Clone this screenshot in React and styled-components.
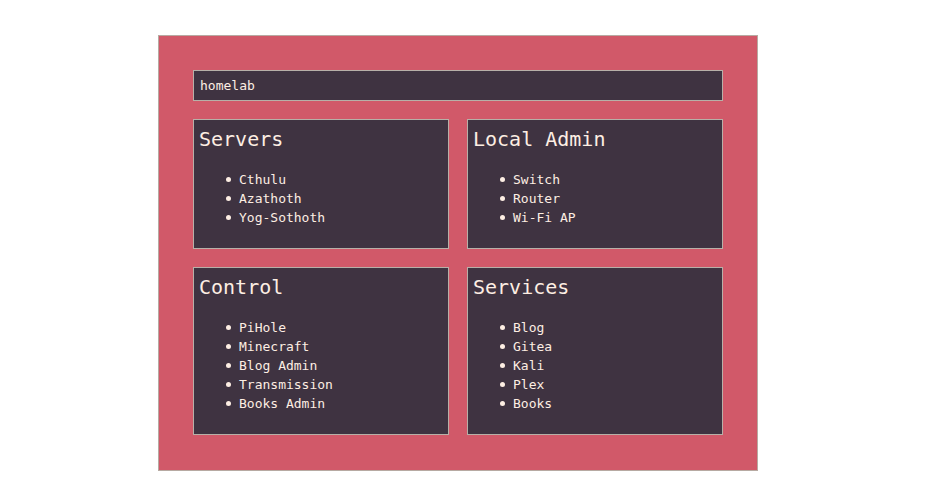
import React from "react";
import styled, { createGlobalStyle } from "styled-components";

const GlobalStyle = createGlobalStyle`
  body {
    margin: 0;
    background: #ffffff;
    color: #fdeee3;
    font-family: "DejaVu Sans Mono", "Liberation Mono", monospace;
    font-size: 13px;
    line-height: 19px;
  }

  *, *::before, *::after {
    box-sizing: border-box;
  }
`;

const Page = styled.div`
  padding: 35px 9px 30px 0;
`;

const Panel = styled.main`
  display: grid;
  grid-template-columns: repeat(2, minmax(0, 1fr));
  gap: 18px;
  width: 100%;
  max-width: 600px;
  margin: 0 auto;
  padding: 34px 34px 35px;
  border: 1px solid #b7aaa2;
  background: #d15969;
`;

const TitleBar = styled.header`
  grid-column: 1 / -1;
  padding: 5px 6px;
  border: 1px solid #b7b0a8;
  background: #3f3341;
`;

const Title = styled.h1`
  margin: 0;
  font-size: 13px;
  font-weight: 400;
  line-height: 19px;
`;

const Card = styled.section`
  padding: 5px;
  border: 1px solid #b7b0a8;
  background: #3f3341;
`;

const CardHeading = styled.h2`
  margin: 0;
  font-size: 20px;
  font-weight: 400;
  line-height: 29px;
`;

const LinkList = styled.ul`
  margin: 16px 0;
  padding-left: 27px;
  list-style: none;
`;

const LinkItem = styled.li`
  display: flex;
  align-items: center;
  gap: 8px;

  &::before {
    content: "";
    flex: none;
    width: 5px;
    height: 5px;
    border-radius: 50%;
    background: currentColor;
  }
`;

const ItemLink = styled.a`
  color: inherit;
  text-decoration: none;

  &:hover {
    text-decoration: underline;
  }
`;

const groups = [
  { name: "Servers", items: ["Cthulu", "Azathoth", "Yog-Sothoth"] },
  { name: "Local Admin", items: ["Switch", "Router", "Wi-Fi AP"] },
  {
    name: "Control",
    items: ["PiHole", "Minecraft", "Blog Admin", "Transmission", "Books Admin"],
  },
  { name: "Services", items: ["Blog", "Gitea", "Kali", "Plex", "Books"] },
];

export default function App() {
  return (
    <>
      <GlobalStyle />
      <Page>
        <Panel>
          <TitleBar>
            <Title>homelab</Title>
          </TitleBar>
          {groups.map((group) => (
            <Card key={group.name}>
              <CardHeading>{group.name}</CardHeading>
              <LinkList>
                {group.items.map((item) => (
                  <LinkItem key={item}>
                    <ItemLink href="#">{item}</ItemLink>
                  </LinkItem>
                ))}
              </LinkList>
            </Card>
          ))}
        </Panel>
      </Page>
    </>
  );
}
